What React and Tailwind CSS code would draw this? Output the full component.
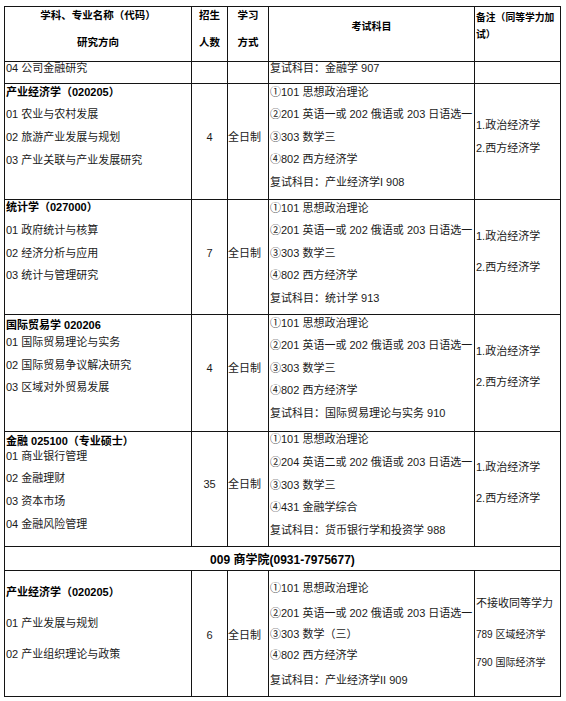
const line = "border-[#141414]";

function Cell({ className = "", children }) {
  return <div className={`border-l border-t ${line} ${className}`}>{children}</div>;
}

function Lines({ items, className = "" }) {
  return (
    <div className={`flex flex-col ${className}`}>
      {items.map((t, i) => (
        <div key={i} className="leading-[14px] whitespace-nowrap">
          {t}
        </div>
      ))}
    </div>
  );
}

const Title = ({ children }) => <span className="font-bold text-black">{children}</span>;

const cols = "grid grid-cols-[187px_36px_41px_206px_86px]";

export default function App() {
  return (
    <div className="min-h-[701px] w-[566px] bg-white pt-[6px] pl-[4px] font-['Liberation_Sans','Noto_Sans_CJK_SC',sans-serif] text-[11px] text-[#1a1a1a]">
      <div className={`w-[557px] border-r border-b ${line}`}>
        {/* header */}
        <div className={`${cols} h-[55px] font-bold text-[10.5px] text-black`}>
          <Cell>
            <Lines className="items-center pt-[1px] gap-[12.7px]" items={["学科、专业名称（代码）", "研究方向"]} />
          </Cell>
          <Cell>
            <Lines className="items-center pt-[1px] gap-[12.7px]" items={["招生", "人数"]} />
          </Cell>
          <Cell>
            <Lines className="items-center pt-[1px] gap-[12.7px]" items={["学习", "方式"]} />
          </Cell>
          <Cell className="text-[10px]">
            <Lines className="items-center pt-[12.7px]" items={["考试科目"]} />
          </Cell>
          <Cell className="pl-[1px] pt-[3.3px] text-[9.8px] leading-[16.5px] whitespace-nowrap">
            备注（同等学力加
            <br />
            试）
          </Cell>
        </div>

        {/* 04 */}
        <div className={`${cols} h-[22px]`}>
          <Cell className="pl-[1px] leading-[12px]">04 公司金融研究</Cell>
          <Cell />
          <Cell />
          <Cell className="pl-[1px] leading-[12px]">复试科目：金融学 907</Cell>
          <Cell />
        </div>

        {/* 产业经济学 */}
        <div className={`${cols} h-[116px]`}>
          <Cell className="pl-[1px]">
            <Lines
              className="pt-[0.7px] gap-[8.8px]"
              items={[<Title>产业经济学（020205）</Title>, "01 农业与农村发展", "02 旅游产业发展与规划", "03 产业关联与产业发展研究"]}
            />
          </Cell>
          <Cell>
            <Lines className="items-center pt-[45.7px]" items={["4"]} />
          </Cell>
          <Cell>
            <Lines className="pt-[45.7px]" items={["全日制"]} />
          </Cell>
          <Cell className="pl-[1px]">
            <Lines
              className="pt-[0.7px] gap-[8.6px]"
              items={["①101 思想政治理论", "②201 英语一或 202 俄语或 203 日语选一", "③303 数学三", "④802 西方经济学", "复试科目：产业经济学I 908"]}
            />
          </Cell>
          <Cell className="pl-[1px]">
            <Lines className="pt-[34px] gap-[9.3px]" items={["1.政治经济学", "2.西方经济学"]} />
          </Cell>
        </div>

        {/* 统计学 */}
        <div className={`${cols} h-[115px]`}>
          <Cell className="pl-[1px]">
            <Lines
              className="pt-[0px] gap-[8.8px]"
              items={[<Title>统计学（027000）</Title>, "01 政府统计与核算", "02 经济分析与应用", "03 统计与管理研究"]}
            />
          </Cell>
          <Cell>
            <Lines className="items-center pt-[46px]" items={["7"]} />
          </Cell>
          <Cell>
            <Lines className="pt-[46px]" items={["全日制"]} />
          </Cell>
          <Cell className="pl-[1px]">
            <Lines
              className="pt-[0.7px] gap-[8.5px]"
              items={["①101 思想政治理论", "②201 英语一或 202 俄语或 203 日语选一", "③303 数学三", "④802 西方经济学", "复试科目：统计学 913"]}
            />
          </Cell>
          <Cell className="pl-[1px]">
            <Lines className="pt-[28.7px] gap-[17px]" items={["1.政治经济学", "2.西方经济学"]} />
          </Cell>
        </div>

        {/* 国际贸易学 */}
        <div className={`${cols} h-[117px]`}>
          <Cell className="pl-[1px] pt-[3px]">
            <Title>
              <div className="leading-[14px] whitespace-nowrap">国际贸易学 020206</div>
            </Title>
            <Lines
              className="pt-[3px] gap-[8.5px]"
              items={["01 国际贸易理论与实务", "02 国际贸易争议解决研究", "03 区域对外贸易发展"]}
            />
          </Cell>
          <Cell>
            <Lines className="items-center pt-[46px]" items={["4"]} />
          </Cell>
          <Cell>
            <Lines className="pt-[46px]" items={["全日制"]} />
          </Cell>
          <Cell className="pl-[1px]">
            <Lines
              className="pt-[0.7px] gap-[8.5px]"
              items={["①101 思想政治理论", "②201 英语一或 202 俄语或 203 日语选一", "③303 数学三", "④802 西方经济学", "复试科目：国际贸易理论与实务 910"]}
            />
          </Cell>
          <Cell className="pl-[1px]">
            <Lines className="pt-[28.7px] gap-[17px]" items={["1.政治经济学", "2.西方经济学"]} />
          </Cell>
        </div>

        {/* 金融 */}
        <div className={`${cols} h-[115px]`}>
          <Cell className="pl-[1px] pt-[2px]">
            <Title>
              <div className="leading-[14px] whitespace-nowrap">金融 025100（专业硕士）</div>
            </Title>
            <Lines
              className="pt-[0.7px] gap-[8.7px]"
              items={["01 商业银行管理", "02 金融理财", "03 资本市场", "04 金融风险管理"]}
            />
          </Cell>
          <Cell>
            <Lines className="items-center pt-[45px]" items={["35"]} />
          </Cell>
          <Cell>
            <Lines className="pt-[45px]" items={["全日制"]} />
          </Cell>
          <Cell className="pl-[1px]">
            <Lines
              className="pt-[0px] gap-[8.8px]"
              items={["①101 思想政治理论", "②204 英语二或 202 俄语或 203 日语选一", "③303 数学三", "④431 金融学综合", "复试科目：货币银行学和投资学 988"]}
            />
          </Cell>
          <Cell className="pl-[1px]">
            <Lines className="pt-[27.7px] gap-[17px]" items={["1.政治经济学", "2.西方经济学"]} />
          </Cell>
        </div>

        {/* 009 商学院 */}
        <div className="grid grid-cols-1 h-[24px]">
          <Cell className="pt-[6px] text-center text-[12px] font-bold leading-[14px] text-black">
            009 商学院(0931-7975677)
          </Cell>
        </div>

        {/* 产业经济学 (商学院) */}
        <div className={`${cols} h-[126px]`}>
          <Cell className="pl-[1px]">
            <Lines
              className="pt-[13.7px] gap-[17px]"
              items={[<Title>产业经济学（020205）</Title>, "01 产业发展与规划", "02 产业组织理论与政策"]}
            />
          </Cell>
          <Cell>
            <Lines className="items-center pt-[56.6px]" items={["6"]} />
          </Cell>
          <Cell>
            <Lines className="pt-[56.6px]" items={["全日制"]} />
          </Cell>
          <Cell className="pl-[1px] pt-[9.7px]">
            <div className="leading-[14px] whitespace-nowrap">①101 思想政治理论</div>
            <div className="mt-[11.3px] leading-[14px] whitespace-nowrap">②201 英语一或 202 俄语或 203 日语选一</div>
            <div className="mt-[7px] leading-[14px] whitespace-nowrap">③303 数学（三）</div>
            <div className="mt-[7px] leading-[14px] whitespace-nowrap">④802 西方经济学</div>
            <div className="mt-[11px] leading-[14px] whitespace-nowrap">复试科目：产业经济学II 909</div>
          </Cell>
          <Cell className="pl-[1px] pt-[25px]">
            <div className="leading-[14px] whitespace-nowrap">不接收同等学力</div>
            <div className="mt-[17.7px] text-[10px] leading-[14px] whitespace-nowrap">789 区域经济学</div>
            <div className="mt-[14.3px] text-[10px] leading-[14px] whitespace-nowrap">790 国际经济学</div>
          </Cell>
        </div>
      </div>
    </div>
  );
}
